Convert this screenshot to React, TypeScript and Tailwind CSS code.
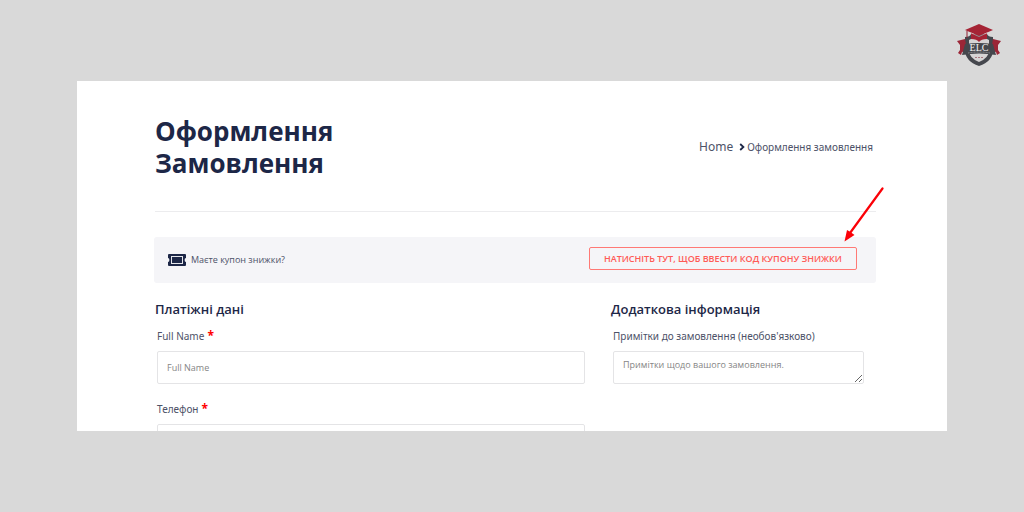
import type { ReactNode } from 'react';

interface FieldLabelProps {
  htmlFor: string;
  required?: boolean;
  children: ReactNode;
}

function Logo() {
  return (
    <svg viewBox="0 0 46 43" className="w-[46px] h-[43px]" role="img" aria-label="ELC">
      <path d="M9 13 Q14 13 15 10 H31 Q32 13 37 13 V26 Q37 37 23 42 Q9 37 9 26 Z" fill="#45474d" />
      <path d="M13 16 Q16 15 17 13 H29 Q30 15 33 16 V26 Q33 34 23 38 Q13 34 13 26 Z" fill="#d6d4d5" />
      <path d="M1 17 L9 15 L11 27 L6 28 L5 31 L2 29 L4 26 L4 21 Z" fill="#9b2637" />
      <path d="M45 17 L37 15 L35 27 L40 28 L41 31 L44 29 L42 26 L42 21 Z" fill="#9b2637" />
      <path d="M9 20 Q23 18 37 20 L40 31 Q23 28 6 31 Z" fill="#45474d" />
      <path d="M15 9 V15 Q21 15 23 18 Q25 15 31 15 V9 L23 13 Z" fill="#a52435" />
      <path d="M23 0 L37 6 L23 12 L9 6 Z" fill="#a52435" />
      <path d="M14 8.5 L23 12.5 L32 8.5" stroke="#d9b9bd" strokeWidth="0.6" fill="none" />
      <path d="M11 7 V14" stroke="#8f2130" strokeWidth="1" />
      <text x="23" y="27" textAnchor="middle" fontFamily="Liberation Serif, serif" fontSize="10" fill="#f3f1f2">
        ELC
      </text>
      <path d="M12 29 Q23 27 34 29" stroke="#aaa9ab" strokeWidth="0.7" strokeDasharray="1 0.5" fill="none" />
      <path d="M19 33.5 H27" stroke="#a87880" strokeWidth="1" strokeDasharray="2 1" />
    </svg>
  );
}

function TicketIcon() {
  return (
    <svg viewBox="0 0 18 12" className="w-[18px] h-3" aria-hidden="true">
      <path
        d="M1 0 H17 Q18 0 18 1 V4 Q16.6 4 16.6 6 Q16.6 8 18 8 V11 Q18 12 17 12 H1 Q0 12 0 11 V8 Q1.4 8 1.4 6 Q1.4 4 0 4 V1 Q0 0 1 0 Z"
        fill="#1d2747"
      />
      <rect x="3.5" y="2.5" width="11" height="7" fill="none" stroke="#e6e7ec" />
    </svg>
  );
}

function PointerArrow() {
  return (
    <svg
      viewBox="0 0 40 55"
      className="absolute -right-[27px] bottom-full mb-[5px] w-10 h-[55px] pointer-events-none"
      aria-hidden="true"
    >
      <path d="M38.5 1.5 L6 46" stroke="#fb0007" strokeWidth="2.2" strokeLinecap="round" />
      <path d="M0.5 54.5 L3 43 L6.5 45 L10.5 48 Z" fill="#fb0007" />
    </svg>
  );
}

function FieldLabel({ htmlFor, required, children }: FieldLabelProps) {
  return (
    <label htmlFor={htmlFor} className="block font-['Noto_Sans',sans-serif] text-[10px] leading-5 text-[#4d5268]">
      {children}
      {required && <span className="text-xs leading-5 font-bold text-[#ff0000]"> *</span>}
    </label>
  );
}

const inputClass =
  'block w-full h-[33px] px-[9px] rounded-[2px] border border-[#e4e4e6] bg-white text-[9px] placeholder:text-[#858585] outline-none';

export default function App() {
  return (
    <div className="min-h-screen bg-[#d9d9d9] pb-20 font-['Open_Sans',sans-serif]">
      <header className="flex justify-end h-[81px] pt-6 pr-[22px]">
        <Logo />
      </header>

      <main className="mx-[77px] bg-white pt-[34px] pl-[78px] pr-[71px] overflow-hidden">
        <div className="flex items-center justify-between pb-8 border-b border-[#ececee]">
          <h1 className="w-[200px] text-[26px] leading-8 font-bold text-[#1d2747]">
            Оформлення Замовлення
          </h1>
          <nav className="flex items-center pr-[3px] font-['Noto_Sans',sans-serif] text-[10px] text-[#4d5268]">
            <a href="#" className="text-xs">Home</a>
            <svg viewBox="0 0 6 8" className="w-[6px] h-2 ml-[6px] mr-[2px]" aria-hidden="true">
              <path d="M1.2 1 L4.4 4 L1.2 7" fill="none" stroke="#1d2747" strokeWidth="1.8" />
            </svg>
            <span>Оформлення замовлення</span>
          </nav>
        </div>

        <section className="flex items-start justify-between h-[46px] mt-[25px] -ml-px pl-[14px] pr-[19px] pt-[10px] rounded-[3px] bg-[#f5f5f8]">
          <div className="flex items-center gap-[5px] h-[26px] text-[9px] text-[#4d5268]">
            <TicketIcon />
            <span>Маєте купон знижки?</span>
          </div>
          <div className="relative">
            <button
              type="button"
              className="block h-[23px] px-[14px] rounded-[2px] border border-[#ff7975] text-[9px] leading-5 font-semibold text-[#ff5b57]"
            >
              НАТИСНІТЬ ТУТ, ЩОБ ВВЕСТИ КОД КУПОНУ ЗНИЖКИ
            </button>
            <PointerArrow />
          </div>
        </section>

        <form className="grid grid-cols-[1.7fr_1fr] gap-x-[26px] mt-[14px] pr-3">
          <section>
            <h2 className="text-[13px] leading-6 font-semibold text-[#1d2747]">Платіжні дані</h2>
            <div className="mt-[5px] pl-[2px]">
              <FieldLabel htmlFor="full-name" required>Full Name</FieldLabel>
              <input id="full-name" type="text" placeholder="Full Name" className={`${inputClass} mt-[5px]`} />
            </div>
            <div className="mt-[15px] pl-[2px]">
              <FieldLabel htmlFor="phone" required>Телефон</FieldLabel>
              <div className="h-[7px] mt-[5px] overflow-hidden">
                <input id="phone" type="tel" className={inputClass} />
              </div>
            </div>
          </section>

          <section>
            <h2 className="text-[13px] leading-6 font-semibold text-[#1d2747]">Додаткова інформація</h2>
            <div className="mt-[5px] pl-[2px]">
              <FieldLabel htmlFor="notes">Примітки до замовлення (необов'язково)</FieldLabel>
              <textarea
                id="notes"
                placeholder="Примітки щодо вашого замовлення."
                className={`${inputClass} mt-[5px] pt-[5px] leading-4 resize overflow-hidden`}
              />
            </div>
          </section>
        </form>
      </main>
    </div>
  );
}
